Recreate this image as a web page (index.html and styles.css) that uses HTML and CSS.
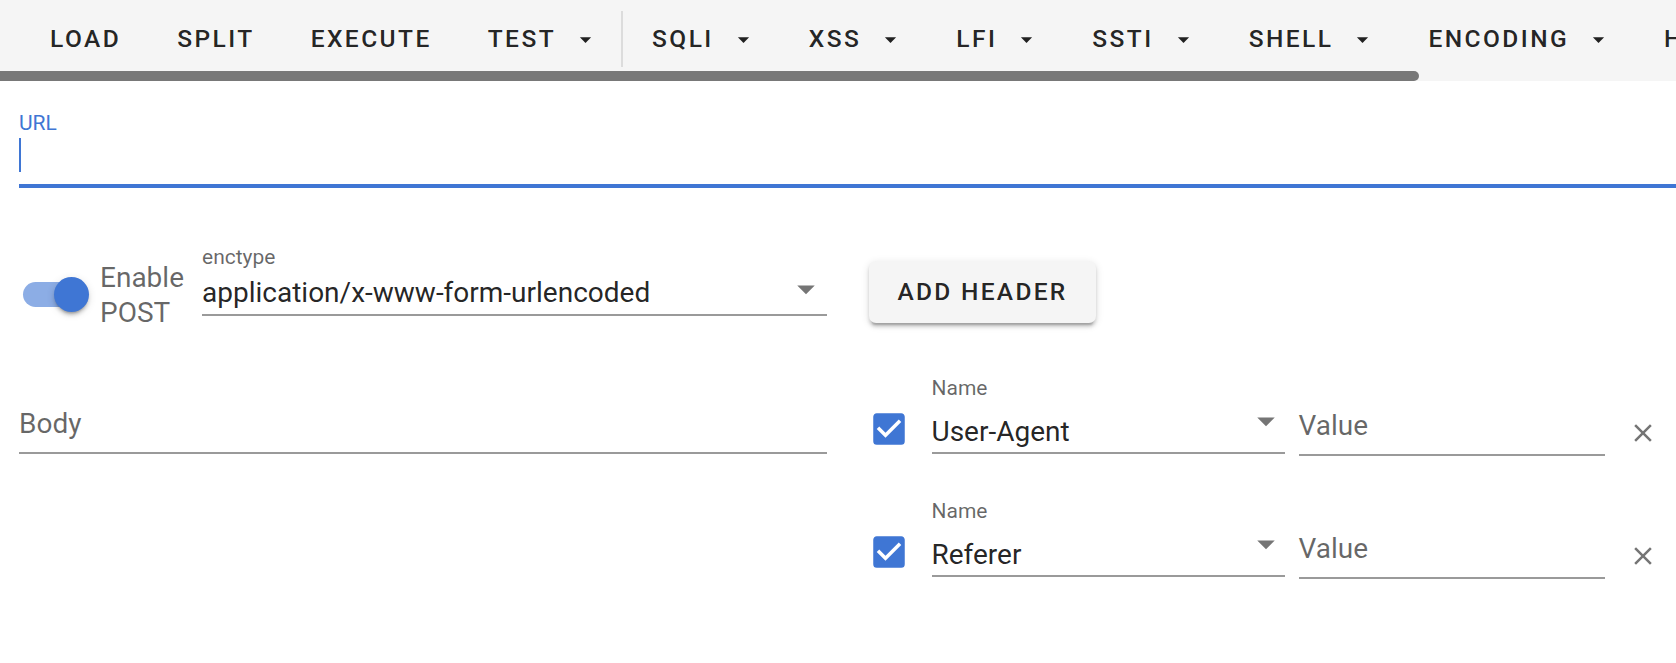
FILE: index.html
```html
<!DOCTYPE html>
<html lang="en">
<head>
<meta charset="utf-8">
<title>HackBar</title>
<link rel="stylesheet" href="styles.css">
</head>
<body>
<header class="toolbar">
  <nav class="toolbar-items">
    <button class="tb-btn">LOAD</button>
    <button class="tb-btn">SPLIT</button>
    <button class="tb-btn">EXECUTE</button>
    <button class="tb-btn">TEST<svg class="tb-caret" viewBox="0 0 24 24"><path d="M7,10L12,15L17,10H7Z"/></svg></button>
    <div class="tb-divider"></div>
    <button class="tb-btn">SQLI<svg class="tb-caret" viewBox="0 0 24 24"><path d="M7,10L12,15L17,10H7Z"/></svg></button>
    <button class="tb-btn">XSS<svg class="tb-caret" viewBox="0 0 24 24"><path d="M7,10L12,15L17,10H7Z"/></svg></button>
    <button class="tb-btn">LFI<svg class="tb-caret" viewBox="0 0 24 24"><path d="M7,10L12,15L17,10H7Z"/></svg></button>
    <button class="tb-btn">SSTI<svg class="tb-caret" viewBox="0 0 24 24"><path d="M7,10L12,15L17,10H7Z"/></svg></button>
    <button class="tb-btn">SHELL<svg class="tb-caret" viewBox="0 0 24 24"><path d="M7,10L12,15L17,10H7Z"/></svg></button>
    <button class="tb-btn">ENCODING<svg class="tb-caret" viewBox="0 0 24 24"><path d="M7,10L12,15L17,10H7Z"/></svg></button>
    <button class="tb-btn">HASHING<svg class="tb-caret" viewBox="0 0 24 24"><path d="M7,10L12,15L17,10H7Z"/></svg></button>
  </nav>
  <div class="scrollbar"><div class="scroll-thumb" style="width:1419px"></div></div>
</header>

<main class="content">
  <div class="url-field">
    <label class="url-label">URL</label>
    <div class="url-input"><span class="caret"></span></div>
  </div>

  <section class="form-row row-top">
    <div class="post-controls">
      <div class="switch">
        <div class="switch-track"></div>
        <div class="switch-thumb"></div>
      </div>
      <div class="switch-label">Enable POST</div>
      <div class="select enctype">
        <div class="field-label">enctype</div>
        <div class="select-row">
          <div class="select-value">application/x-www-form-urlencoded</div>
          <svg class="select-arrow enc-arrow" viewBox="0 0 24 24"><path d="M7,10L12,15L17,10H7Z"/></svg>
        </div>
      </div>
    </div>
    <div class="actions">
      <button class="add-header">ADD HEADER</button>
    </div>
  </section>

  <section class="form-row row-bottom">
    <div class="body-field">Body</div>
    <div class="headers">
      <div class="header-row">
        <svg class="checkbox" viewBox="0 0 24 24"><path d="M10,17L5,12L6.41,10.58L10,14.17L17.59,6.58L19,8M19,3H5C3.89,3 3,3.89 3,5V19A2,2 0 0,0 5,21H19A2,2 0 0,0 21,19V5C21,3.89 20.1,3 19,3Z"/></svg>
        <div class="select name">
          <div class="field-label">Name</div>
          <div class="select-row">
            <div class="select-value">User-Agent</div>
            <svg class="select-arrow name-arrow" viewBox="0 0 24 24"><path d="M7,10L12,15L17,10H7Z"/></svg>
          </div>
        </div>
        <div class="value-field">Value</div>
        <svg class="close" viewBox="0 0 24 24"><path d="M19,6.41L17.59,5L12,10.59L6.41,5L5,6.41L10.59,12L5,17.59L6.41,19L12,13.41L17.59,19L19,17.59L13.41,12L19,6.41Z"/></svg>
      </div>
      <div class="header-row">
        <svg class="checkbox" viewBox="0 0 24 24"><path d="M10,17L5,12L6.41,10.58L10,14.17L17.59,6.58L19,8M19,3H5C3.89,3 3,3.89 3,5V19A2,2 0 0,0 5,21H19A2,2 0 0,0 21,19V5C21,3.89 20.1,3 19,3Z"/></svg>
        <div class="select name">
          <div class="field-label">Name</div>
          <div class="select-row">
            <div class="select-value">Referer</div>
            <svg class="select-arrow name-arrow" viewBox="0 0 24 24"><path d="M7,10L12,15L17,10H7Z"/></svg>
          </div>
        </div>
        <div class="value-field">Value</div>
        <svg class="close" viewBox="0 0 24 24"><path d="M19,6.41L17.59,5L12,10.59L6.41,5L5,6.41L10.59,12L5,17.59L6.41,19L12,13.41L17.59,19L19,17.59L13.41,12L19,6.41Z"/></svg>
      </div>
    </div>
  </section>
</main>
</body>
</html>
```

FILE: styles.css
```css
html, body {
  margin: 0;
  padding: 0;
  background: #ffffff;
  font-family: Roboto, "Noto Sans", sans-serif;
  color: rgba(0, 0, 0, 0.87);
}

.toolbar {
  background: #f5f5f5;
  width: 1676px;
  overflow: hidden;
}

.toolbar-items {
  display: flex;
  align-items: flex-start;
  height: 60px;
  padding: 11px 0 0 22px;
  white-space: nowrap;
  overflow: hidden;
}

.tb-btn {
  flex: none;
  display: inline-flex;
  align-items: center;
  height: 56px;
  padding: 0 28px;
  margin: 0;
  border: 0;
  background: transparent;
  font-family: Roboto, sans-serif;
  font-size: 24.5px;
  font-weight: 500;
  letter-spacing: 2.45px;
  line-height: 56px;
  color: rgba(0, 0, 0, 0.87);
}

.tb-caret {
  width: 27px;
  height: 27px;
  margin-left: 16px;
  margin-right: -4px;
  fill: #212121;
  flex: none;
}

.tb-divider {
  flex: none;
  width: 2px;
  height: 56px;
  margin: 0 1px 0 -2px;
  background: #dcdcdc;
}

.scrollbar {
  height: 10px;
  background: #f5f5f5;
}

.scroll-thumb {
  height: 10px;
  background: #787878;
  border-radius: 0 5px 5px 0;
}

.content {
  padding: 0 0 0 19px;
}

.url-field {
  padding-top: 32px;
}

.url-label {
  display: block;
  font-size: 21px;
  line-height: 21px;
  color: #3f76d4;
}

.url-input {
  height: 34px;
  padding: 4px 0 12px;
  border-bottom: 4px solid #3f76d4;
}

.caret {
  display: block;
  width: 2px;
  height: 34px;
  background: #3f76d4;
}

.form-row {
  display: grid;
  grid-template-columns: 1fr 1fr;
  column-gap: 42px;
  align-items: start;
}

.row-top {
  margin-top: 59px;
}

.row-bottom {
  margin-top: 48px;
}

.post-controls {
  display: flex;
  align-items: flex-start;
}

.switch {
  position: relative;
  flex: none;
  width: 70px;
  height: 35px;
  margin: 30px 0 0 4px;
}

.switch-track {
  position: absolute;
  left: 0;
  top: 5px;
  width: 63px;
  height: 25px;
  border-radius: 12.5px;
  background: rgba(63, 118, 212, 0.6);
}

.switch-thumb {
  position: absolute;
  left: 31px;
  top: 0;
  width: 35px;
  height: 35px;
  border-radius: 50%;
  background: #3f76d4;
  box-shadow: 0 3.5px 2px -2px rgba(0, 0, 0, 0.2), 0 3.5px 3.5px 0 rgba(0, 0, 0, 0.14), 0 2px 9px 0 rgba(0, 0, 0, 0.12);
}

.switch-label {
  flex: none;
  width: 90px;
  margin: 13px 0 0 7px;
  font-size: 28px;
  line-height: 35px;
  color: rgba(0, 0, 0, 0.6);
}

.select {
  display: flex;
  flex-direction: column;
}

.enctype {
  flex: 1;
  min-width: 0;
  margin-left: 12px;
  padding-bottom: 4px;
  border-bottom: 2px solid #9a9a9a;
}

.field-label {
  font-size: 21px;
  line-height: 21px;
  color: rgba(0, 0, 0, 0.6);
}

.select-row {
  display: flex;
  align-items: flex-start;
}

.enctype .select-row {
  margin-top: 7px;
}

.select-value {
  flex: 1;
  min-width: 0;
  font-size: 28px;
  line-height: 35px;
  color: rgba(0, 0, 0, 0.87);
  white-space: nowrap;
  overflow: hidden;
}

.select-arrow {
  flex: none;
  width: 42px;
  height: 42px;
  fill: #757575;
}

.enc-arrow {
  margin-top: -7px;
}

.name-arrow {
  margin-top: -14px;
  margin-right: -2px;
}

.add-header {
  margin: 14px 0 0;
  height: 62px;
  padding: 0 28px 0 29px;
  border: 0;
  border-radius: 7px;
  background: #f5f5f5;
  font-family: Roboto, sans-serif;
  font-size: 24.5px;
  font-weight: 500;
  letter-spacing: 2.3px;
  line-height: 62px;
  color: rgba(0, 0, 0, 0.87);
  box-shadow: 0 5px 2px -3.5px rgba(0, 0, 0, 0.2), 0 3.5px 3.5px 0 rgba(0, 0, 0, 0.14), 0 2px 9px 0 rgba(0, 0, 0, 0.12);
}

.body-field {
  margin-top: 28px;
  padding-bottom: 11px;
  font-size: 28px;
  line-height: 35px;
  color: rgba(0, 0, 0, 0.6);
  border-bottom: 2px solid #9a9a9a;
}

.headers {
  display: flex;
  flex-direction: column;
  gap: 45px;
}

.header-row {
  display: flex;
  align-items: flex-start;
}

.checkbox {
  flex: none;
  width: 42px;
  height: 42px;
  margin: 30px 0 0 -1px;
  fill: #3f76d4;
}

.name {
  flex: none;
  width: 353px;
  margin-left: 22px;
  padding-bottom: 3px;
  border-bottom: 2px solid #9a9a9a;
}

.name .select-row {
  margin-top: 15px;
}

.value-field {
  flex: none;
  width: 306px;
  margin: 30px 0 0 14px;
  padding-bottom: 11px;
  font-size: 28px;
  line-height: 35px;
  color: rgba(0, 0, 0, 0.6);
  border-bottom: 2px solid #9a9a9a;
}

.close {
  flex: none;
  width: 30px;
  height: 30px;
  margin: 39.5px 0 0 23px;
  fill: #757575;
}
```
